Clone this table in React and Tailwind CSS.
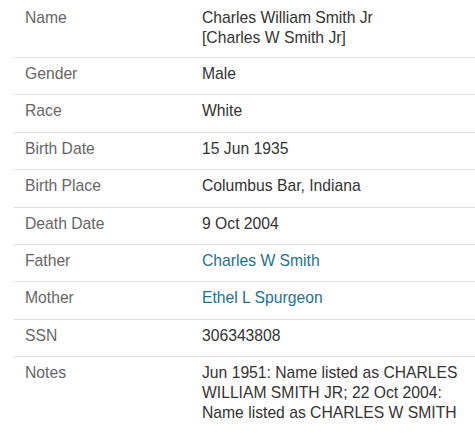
import React from "react";

const rows = [
  { label: "Name", value: ["Charles William Smith Jr", "[Charles W Smith Jr]"] },
  { label: "Gender", value: "Male" },
  { label: "Race", value: "White" },
  { label: "Birth Date", value: "15 Jun 1935" },
  { label: "Birth Place", value: "Columbus Bar, Indiana" },
  { label: "Death Date", value: "9 Oct 2004" },
  { label: "Father", value: "Charles W Smith", link: true },
  { label: "Mother", value: "Ethel L Spurgeon", link: true },
  { label: "SSN", value: "306343808" },
  {
    label: "Notes",
    value:
      "Jun 1951: Name listed as CHARLES WILLIAM SMITH JR; 22 Oct 2004: Name listed as CHARLES W SMITH",
  },
];

const App = () => {
  return (
    <div className="bg-white min-h-screen font-['Liberation_Sans',Arial,sans-serif] text-[15.7px] leading-[20px]">
      <div className="ml-[13px]">
        {rows.map((row, index) => (
          <div
            key={row.label}
            className={`flex ${
              index === rows.length - 1 ? "" : "border-b border-[#e2e2e2]"
            } ${index === 0 ? "pt-[8px] pb-[9px]" : "pt-[6px] pb-[10.4px]"}`}
          >
            <div className="w-[189px] shrink-0 pl-[12px] text-[#666666]">{row.label}</div>
            <div className="flex-1 pr-[4px]">
              {Array.isArray(row.value) ? (
                row.value.map((line) => (
                  <div key={line} className="text-[#333333]">
                    {line}
                  </div>
                ))
              ) : row.link ? (
                <a href="#" className="text-[#1f7190]">
                  {row.value}
                </a>
              ) : (
                <span className="text-[#333333]">{row.value}</span>
              )}
            </div>
          </div>
        ))}
      </div>
    </div>
  );
};

export default App;
